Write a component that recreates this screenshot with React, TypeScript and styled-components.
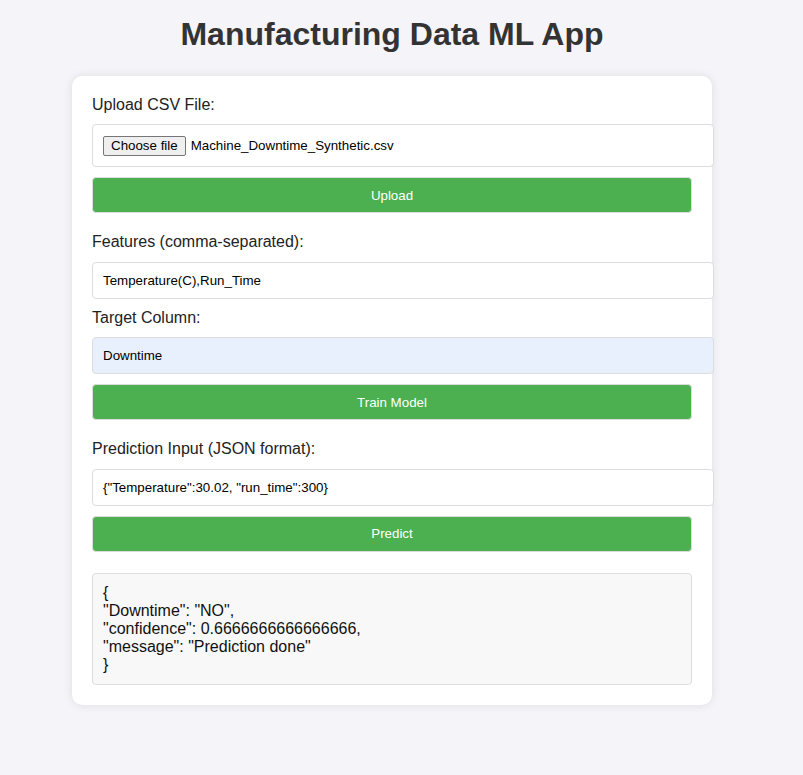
import styled, { createGlobalStyle } from 'styled-components'

const GlobalStyle = createGlobalStyle`
  html, body {
    margin: 0;
    padding: 0;
    background: #f4f4f9;
  }
  body {
    font-family: "Liberation Sans", Arial, sans-serif;
    color: #222;
  }
`

const Page = styled.div`
  padding: 16px 19px 40px 0;
  min-height: 775px;
  box-sizing: border-box;
`

const Title = styled.h1`
  margin: 0 0 23px;
  text-align: center;
  font-size: 32px;
  line-height: 37px;
  font-weight: bold;
  color: #333;
`

const Card = styled.div`
  width: 600px;
  margin: 0 auto;
  padding: 20px;
  background: #fff;
  border-radius: 10px;
  box-shadow: 0 0 10px rgba(0, 0, 0, 0.1);
  display: flex;
  flex-direction: column;
  align-items: flex-start;
`

const Label = styled.label<{ $spaced?: boolean }>`
  display: block;
  font-size: 16px;
  line-height: 18.4px;
  margin: ${(p) => (p.$spaced ? '20px' : '0')} 0 10px;
`

const Field = styled.div<{ $autofill?: boolean }>`
  box-sizing: content-box;
  width: 100%;
  padding: 10px;
  margin-bottom: 10px;
  border: 1px solid #ddd;
  border-radius: 4px;
  background: ${(p) => (p.$autofill ? '#e8f0fe' : '#fff')};
  font-size: 13.33px;
  line-height: 15px;
  color: #000;
  display: flex;
  align-items: center;
`

const FileBox = styled(Field)`
  height: 21px;
`

const ChooseButton = styled.span`
  display: inline-block;
  padding: 1px 7px;
  height: 16px;
  line-height: 16px;
  background: #efefef;
  border: 1px solid #767676;
  border-radius: 2px;
  margin-right: 5px;
`

const Button = styled.button`
  box-sizing: border-box;
  width: 100%;
  height: 36px;
  padding: 0;
  background: #4caf50;
  color: #fff;
  border: 1px solid #ddd;
  border-radius: 4px;
  font-family: "Liberation Sans", Arial, sans-serif;
  font-size: 13.33px;
  cursor: pointer;
`

const Result = styled.pre`
  box-sizing: border-box;
  width: 100%;
  margin: 21px 0 0;
  padding: 10px;
  background: #f8f8f8;
  border: 1px solid #ddd;
  border-radius: 4px;
  font-family: "Liberation Sans", Arial, sans-serif;
  font-size: 16px;
  line-height: 18px;
  color: #111;
  white-space: pre-wrap;
`

const result = `{
"Downtime": "NO",
"confidence": 0.6666666666666666,
"message": "Prediction done"
}`

export default function App() {
  return (
    <>
      <GlobalStyle />
      <Page>
        <Title>Manufacturing Data ML App</Title>
        <Card>
          <Label>Upload CSV File:</Label>
          <FileBox>
            <ChooseButton>Choose file</ChooseButton>
            <span>Machine_Downtime_Synthetic.csv</span>
          </FileBox>
          <Button>Upload</Button>

          <Label $spaced>Features (comma-separated):</Label>
          <Field>Temperature(C),Run_Time</Field>
          <Label>Target Column:</Label>
          <Field $autofill>Downtime</Field>
          <Button>Train Model</Button>

          <Label $spaced>Prediction Input (JSON format):</Label>
          <Field>{'{"Temperature":30.02, "run_time":300}'}</Field>
          <Button>Predict</Button>

          <Result>{result}</Result>
        </Card>
      </Page>
    </>
  )
}
